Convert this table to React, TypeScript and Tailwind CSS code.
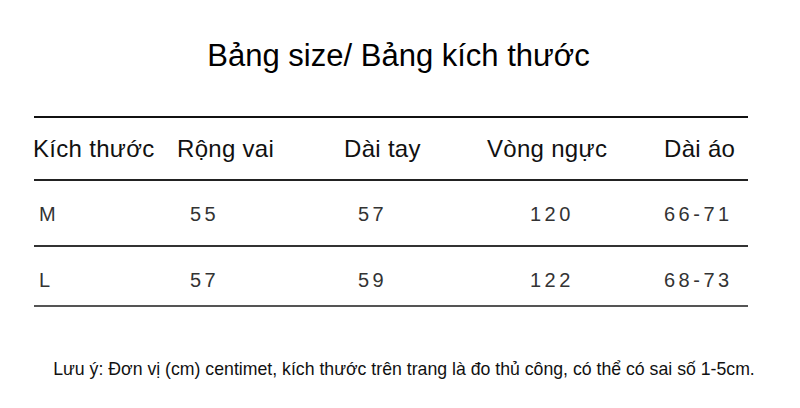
import React from "react";

const headers = [
  { t: "Kích thước", w: "w-[144px]" },
  { t: "Rộng vai", w: "w-[167px]" },
  { t: "Dài tay", w: "w-[143px]" },
  { t: "Vòng ngực", w: "w-[177px]" },
  { t: "Dài áo", w: "w-[84px]" },
];

const rows = [
  ["M", "55", "57", "120", "66-71"],
  ["L", "57", "59", "122", "68-73"],
];

const cellCls = [
  "w-[144px] pl-[6px]",
  "w-[167px] pl-[13px]",
  "w-[143px] pl-[14px]",
  "w-[177px] pl-[43px]",
  "w-[84px] pl-0",
];

export default function App() {
  return (
    <div className="w-[800px] h-[408px] bg-white overflow-hidden text-black" style={{ fontFamily: '"Liberation Sans", Arial, sans-serif' }}>
      <div className="h-[116px] pt-[36px] flex justify-center">
        <h1 className="text-[31px] leading-[40px] font-normal pr-[3px]">Bảng size/ Bảng kích thước</h1>
      </div>
      <div className="ml-[34px] w-[714px]">
        <div className="border-t-[2px] border-[#111]" />
        <div className="h-[61px] flex items-center -ml-[1px]">
          {headers.map((h) => (
            <div key={h.t} className={`${h.w} text-[24px] leading-none text-[#111] tracking-[0.3px]`}>
              {h.t}
            </div>
          ))}
        </div>
        <div className="border-t-[2px] border-[#222]" />
        {rows.map((r, i) => (
          <React.Fragment key={r[0]}>
            <div className={`${i === 0 ? "h-[64px] pt-[2px]" : "h-[58px] pt-[8px]"} flex items-center -ml-[1px]`}>
              {r.map((c, j) => (
                <div key={j} className={`${cellCls[j]} text-[20px] leading-none text-[#333] tracking-[3.5px]`}>
                  {c}
                </div>
              ))}
            </div>
            <div className={`border-t-[2px] ${i === 0 ? "border-[#333]" : "border-[#555]"}`} />
          </React.Fragment>
        ))}
      </div>
      <div className="mt-[50px] flex justify-center pl-[8px]">
        <p className="text-[17.7px] leading-[24px] text-[#111]" style={{ fontFamily: '"Liberation Sans Narrow", "Liberation Sans", Arial, sans-serif' }}>
          Lưu ý: Đơn vị (cm) centimet, kích thước trên trang là đo thủ công, có thể có sai số 1-5cm.
        </p>
      </div>
    </div>
  );
}
